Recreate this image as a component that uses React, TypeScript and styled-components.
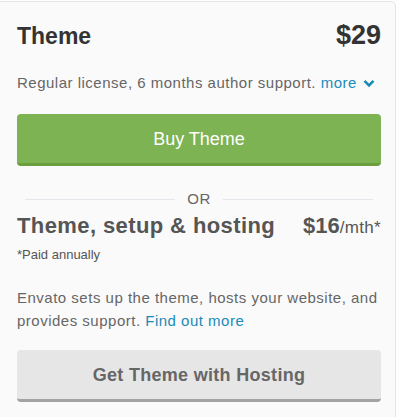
import { Component, ReactNode } from "react"
import styled, { createGlobalStyle } from "styled-components"

const Global = createGlobalStyle`
	html, body {
		margin: 0;
		padding: 0;
		background: #fff;
	}
	body {
		font-family: "Liberation Sans", Arial, sans-serif;
		color: #666;
	}
`

const S = {
	Panel: styled.div`
		box-sizing: border-box;
		width: 397px;
		height: 420px;
		margin: 1px 0 0 -1px;
		padding: 18px 14px 0 17px;
		background: #fafafa;
		border: 1px solid #e4e4e4;
		border-radius: 0 5px 0 0;
	`,
	Header: styled.div`
		display: flex;
		justify-content: space-between;
		align-items: baseline;
		color: #333;
		font-weight: 700;
		.title {
			font-size: 23px;
		}
		.price {
			font-size: 27px;
		}
	`,
	License: styled.p`
		margin: 22px 0 0;
		font-size: 15px;
		letter-spacing: 0.5px;
		line-height: 20px;
		color: #666;
	`,
	Link: styled.a`
		color: #1a8bb8;
		text-decoration: none;
		cursor: pointer;
		svg {
			margin-left: 6px;
			vertical-align: 0px;
		}
	`,
	Button: styled.button<{ $variant: "buy" | "host" }>`
		display: block;
		box-sizing: border-box;
		width: 100%;
		height: 52px;
		border: none;
		border-radius: 4px;
		font-family: inherit;
		font-size: 18px;
		padding-top: 2px;
		cursor: pointer;
		${p =>
			p.$variant === "buy"
				? `
			margin-top: 21px;
			background: #7db352;
			border-bottom: 3px solid #6a9e3e;
			color: #fff;
		`
				: `
			margin-top: 18px;
			background: #e6e6e6;
			border-bottom: 3px solid #a3a3a3;
			color: #666;
			font-weight: 700;
			letter-spacing: 0.3px;
		`}
	`,
	Or: styled.div`
		display: flex;
		align-items: center;
		gap: 12px;
		margin: 24px 8px 0;
		font-size: 15px;
		line-height: 18px;
		letter-spacing: 0.5px;
		color: #666;
		&::before,
		&::after {
			content: "";
			flex: 1;
			height: 1px;
			background: #e3e6ea;
		}
	`,
	HostRow: styled.div`
		display: flex;
		justify-content: space-between;
		align-items: baseline;
		margin-top: 4px;
		color: #555;
		line-height: 28px;
		.name {
			font-size: 22px;
			font-weight: 700;
			letter-spacing: 0.4px;
		}
		.price {
			font-size: 22px;
			font-weight: 700;
			small {
				font-size: 17px;
				font-weight: 400;
				letter-spacing: 0.3px;
			}
		}
	`,
	Note: styled.div`
		margin-top: 5px;
		font-size: 13px;
		line-height: 16px;
		color: #555;
	`,
	Desc: styled.p`
		margin: 23px 0 0;
		font-size: 15px;
		letter-spacing: 0.5px;
		line-height: 23px;
		color: #666;
	`,
}

const Chevron = () => (
	<svg width="12" height="9" viewBox="0 0 12 9">
		<path d="M1.5 1.8 L6 6.3 L10.5 1.8" fill="none" stroke="#1a8bb8" strokeWidth="2.6" />
	</svg>
)

class App extends Component {
	render(): ReactNode {
		return (
			<>
				<Global />
				<S.Panel>
					<S.Header>
						<span className="title">Theme</span>
						<span className="price">$29</span>
					</S.Header>
					<S.License>
						Regular license, 6 months author support.{" "}
						<S.Link>
							more
							<Chevron />
						</S.Link>
					</S.License>
					<S.Button $variant="buy">Buy Theme</S.Button>
					<S.Or>OR</S.Or>
					<S.HostRow>
						<span className="name">Theme, setup &amp; hosting</span>
						<span className="price">
							$16<small>/mth*</small>
						</span>
					</S.HostRow>
					<S.Note>*Paid annually</S.Note>
					<S.Desc>
						Envato sets up the theme, hosts your website, and provides support.{" "}
						<S.Link>Find out more</S.Link>
					</S.Desc>
					<S.Button $variant="host">Get Theme with Hosting</S.Button>
				</S.Panel>
			</>
		)
	}
}

export default App
